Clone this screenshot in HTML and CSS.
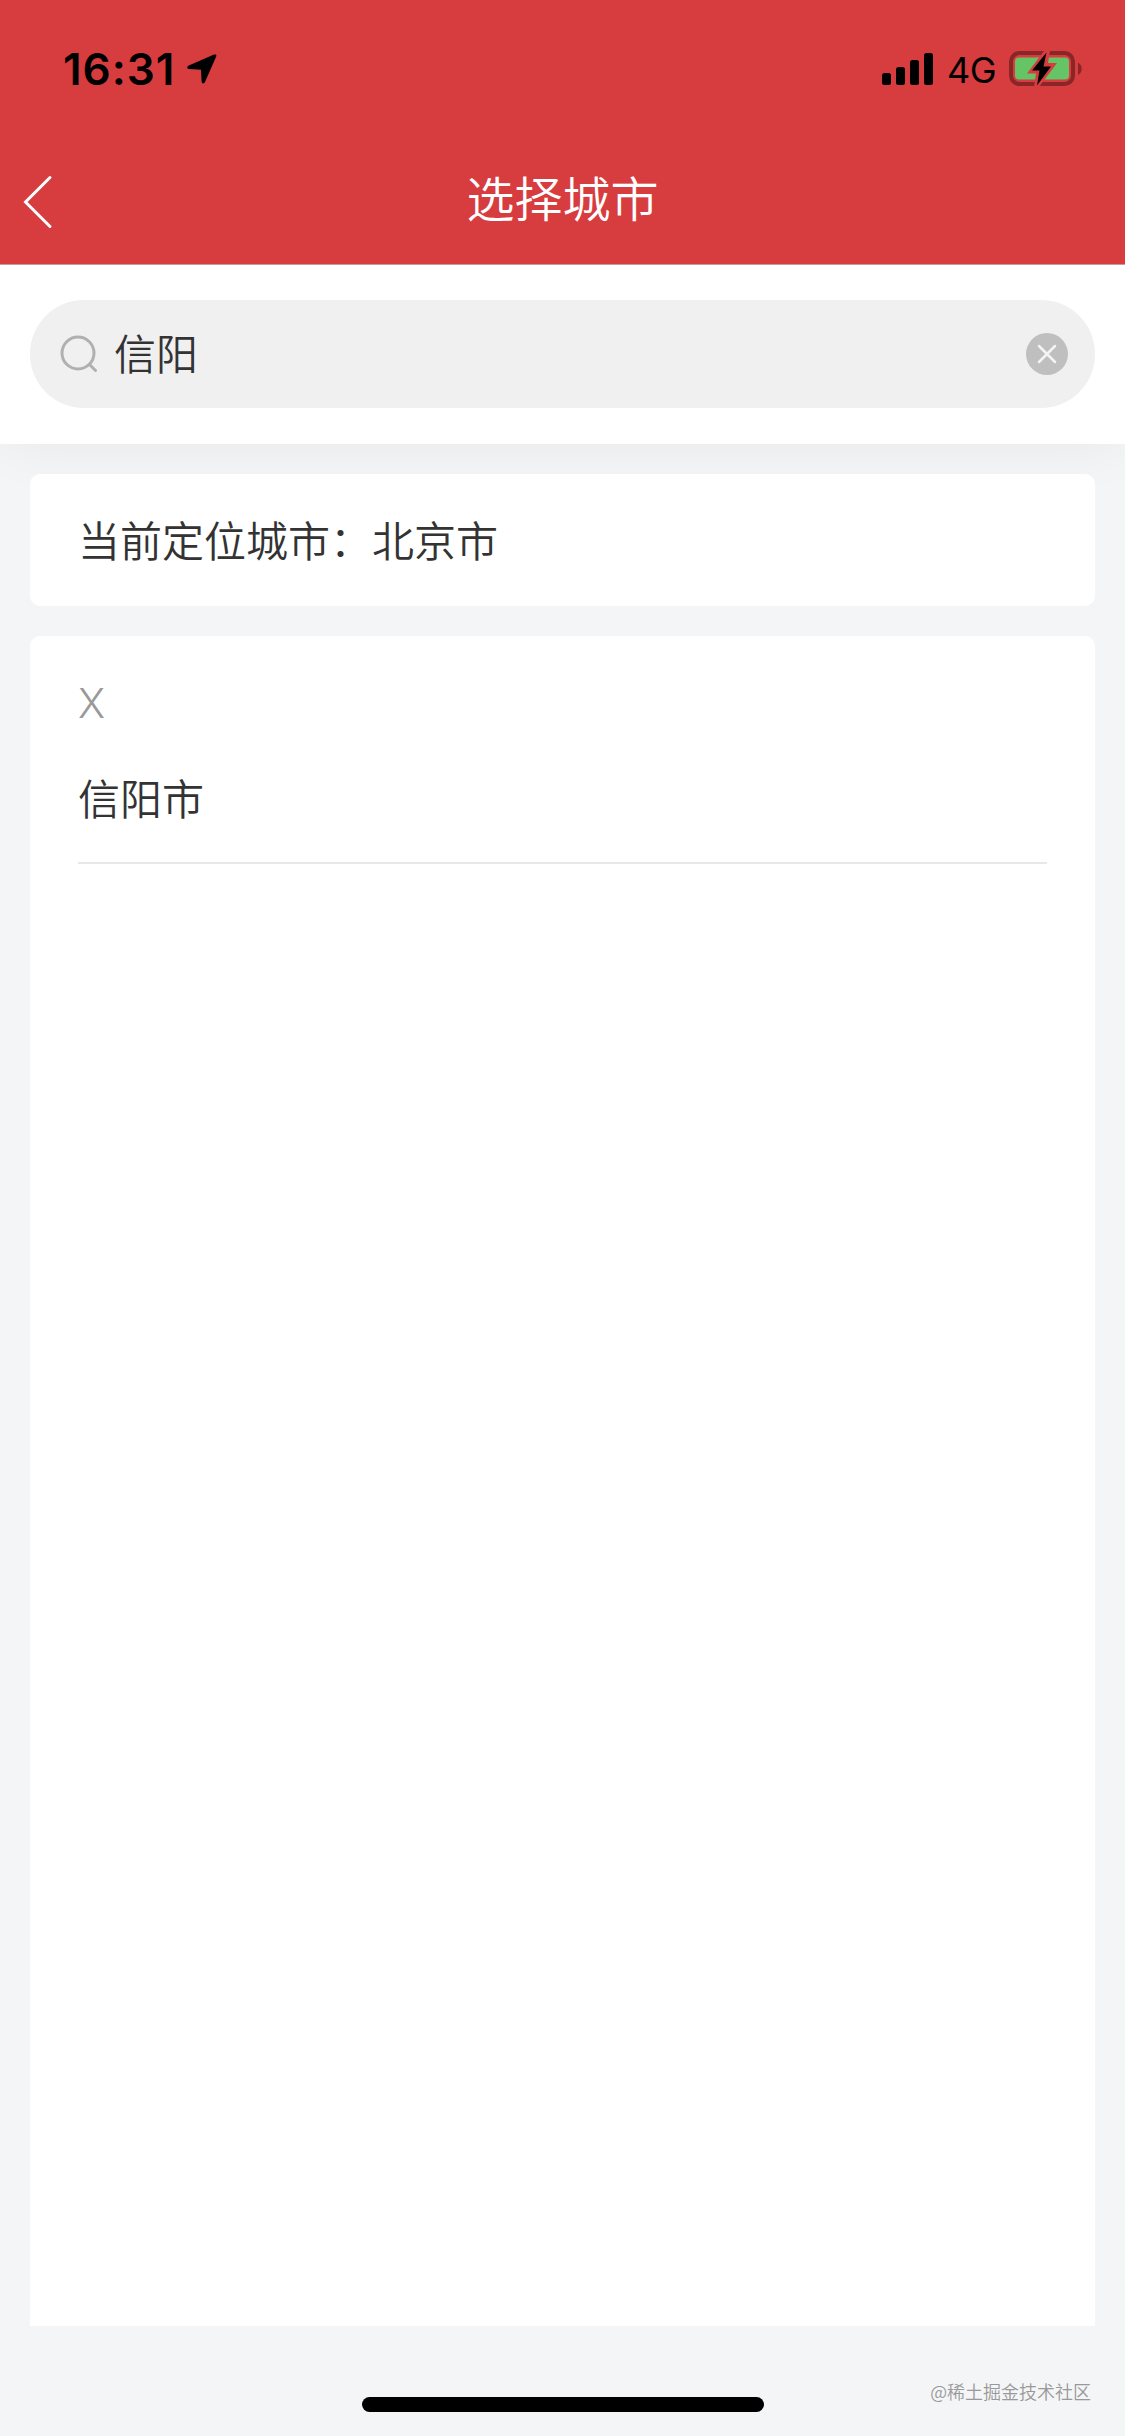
FILE: index.html
```html
<!DOCTYPE html>
<html lang="zh-CN">
  <head>
    <meta charset="UTF-8" />
    <meta name="viewport" content="width=device-width, initial-scale=1.0" />
    <title>选择城市</title>
    <link rel="stylesheet" href="styles.css">
  </head>
  <body>
    <header class="header">
      <div class="status-bar">
        <div class="status-left">
          <span class="time">16:31</span>
          <svg class="location" width="30" height="30" viewBox="0 0 30 30">
            <path d="M27 .6 1.800 11.500C-.4 12.500 0 15 2.200 15.100L14 15.800 14.600 27.500C14.900 30 17 30 18 28L29 3C30 1 29 0 27 .6Z" />
          </svg>
        </div>
        <div class="status-right">
          <svg class="signal" width="52" height="32" viewBox="0 0 52 32">
            <rect x="0" y="20" width="9" height="12" rx="2.500" />
            <rect x="14" y="14" width="9" height="18" rx="2.500" />
            <rect x="28" y="7" width="9" height="25" rx="2.500" />
            <rect x="42" y="0" width="9" height="32" rx="2.500" />
          </svg>
          <span class="network">4G</span>
          <svg class="battery" width="74" height="36" viewBox="0 0 74 36">
            <rect class="battery-frame" x="2" y="2" width="62" height="31" rx="8.500" />
            <path class="battery-cap" d="M69 11.500C74 14 74 21.500 69 24Z" />
            <rect class="battery-level" x="6" y="6.500" width="54" height="22" rx="4" />
            <path class="bolt-gap" d="M35 0 18 22.500H27L25 36H30L48 12H39L41 0Z" />
            <path class="bolt" d="M37.500 1.500 23 19.500H30.500L28 34.500 42 15.500H34.500Z" />
          </svg>
        </div>
      </div>
      <nav class="nav-bar">
        <svg class="back" width="32" height="54" viewBox="0 0 32 54">
          <path d="M28 2.500 3.500 27 28 51.500" />
        </svg>
        <h1 class="title">选择城市</h1>
      </nav>
    </header>

    <div class="search">
      <div class="search-box">
        <svg class="search-icon" width="38" height="38" viewBox="0 0 38 38">
          <circle cx="18" cy="18" r="16" />
          <path d="M29.500 29.500 35.500 35.500" />
        </svg>
        <span class="keyword">信阳</span>
        <svg class="clear" width="42" height="42" viewBox="0 0 42 42">
          <circle cx="21" cy="21" r="21" />
          <path d="M13 13 29 29M29 13 13 29" />
        </svg>
      </div>
    </div>

    <main class="content">
      <div class="card current">当前定位城市：北京市</div>
      <div class="card list">
        <div class="letter">X</div>
        <div class="city">信阳市</div>
      </div>
    </main>

    <footer class="footer">
      <div class="home-indicator"></div>
      <span class="watermark">@稀土掘金技术社区</span>
    </footer>
  </body>
</html>
```
FILE: styles.css
```css
* {
  box-sizing: border-box;
}

body {
  display: flex;
  flex-direction: column;
  height: 2436px;
  margin: 0;
  background-color: #f4f5f7;
  color: #333;
  font-family: "Noto Sans CJK SC", sans-serif;
  font-size: 42px;
  font-weight: 350;
}

svg {
  display: block;
  flex-shrink: 0;
}

.header {
  position: relative;
  z-index: 1;
  height: 265px;
  background-color: #d73c3f;
  border-bottom: 1px solid #c99a9a;
}

.status-bar {
  display: flex;
  justify-content: space-between;
  align-items: center;
  height: 132px;
  padding: 6px 42px 0 63px;
  color: #000;
  font-family: Inter, sans-serif;
}

.status-left,
.status-right {
  display: flex;
  align-items: center;
}

.time {
  width: 112px;
  font-size: 44px;
  font-weight: 600;
  line-height: 44px;
  letter-spacing: 1px;
}

.location {
  margin-left: 12px;
}

.network {
  width: 48px;
  margin: 2px 14px 0 13px;
  font-size: 36px;
  font-weight: 400;
  line-height: 44px;
  letter-spacing: -0.5px;
}

.battery-frame {
  fill: none;
  stroke: #8a2528;
  stroke-width: 4;
}

.battery-cap {
  fill: #8a2528;
}

.battery-level {
  fill: #65c466;
}

.bolt-gap {
  fill: #d73c3f;
}

.nav-bar {
  display: flex;
  align-items: center;
  height: 132px;
  padding: 0 22px;
}

.back {
  margin-top: 7px;
  fill: none;
  stroke: #fff;
  stroke-width: 3;
  stroke-linecap: round;
}

.title {
  flex: 1;
  margin: 0 32px 5px 0;
  color: #fff;
  font-size: 48px;
  font-weight: 350;
  line-height: 72px;
  text-align: center;
}

.search {
  height: 179px;
  padding: 35px 30px 36px;
  background-color: #fff;
  box-shadow: 0 0 60px rgba(0, 0, 0, 0.06);
}

.search-box {
  display: flex;
  align-items: center;
  height: 108px;
  padding: 0 27px 0 30px;
  border-radius: 54px;
  background-color: #f0f0f0;
}

.search-icon {
  fill: none;
  stroke: #b0b0b0;
  stroke-width: 3;
  stroke-linecap: round;
}

.keyword {
  flex: 1;
  margin: 0 0 4px 16px;
  line-height: 60px;
}

.clear {
  fill: #bfbfbf;
}

.clear path {
  stroke: #f4f4f4;
  stroke-width: 2.5;
  stroke-linecap: round;
}

.content {
  display: flex;
  flex: 1;
  flex-direction: column;
  gap: 30px;
  padding: 30px 30px 0;
}

.card {
  padding: 0 48px;
  border-radius: 10px;
  background-color: #fff;
}

.current {
  height: 132px;
  line-height: 130px;
}

.list {
  flex: 1;
  border-radius: 10px 10px 0 0;
}

.letter {
  padding-top: 37px;
  color: #999;
  font-family: Inter, sans-serif;
  font-size: 41px;
  font-weight: 350;
  line-height: 60px;
}

.city {
  height: 131px;
  border-bottom: 2px solid #e8e8e8;
  line-height: 127px;
}

.footer {
  display: grid;
  grid-template-columns: 1fr 402px 1fr;
  height: 110px;
  padding: 0 34px 0 35px;
}

.home-indicator {
  grid-column: 2;
  height: 15px;
  margin-top: 71px;
  border-radius: 8px;
  background-color: #000;
}

.watermark {
  margin-top: 52px;
  color: #999;
  font-size: 18px;
  line-height: 26px;
  text-align: right;
}
```
